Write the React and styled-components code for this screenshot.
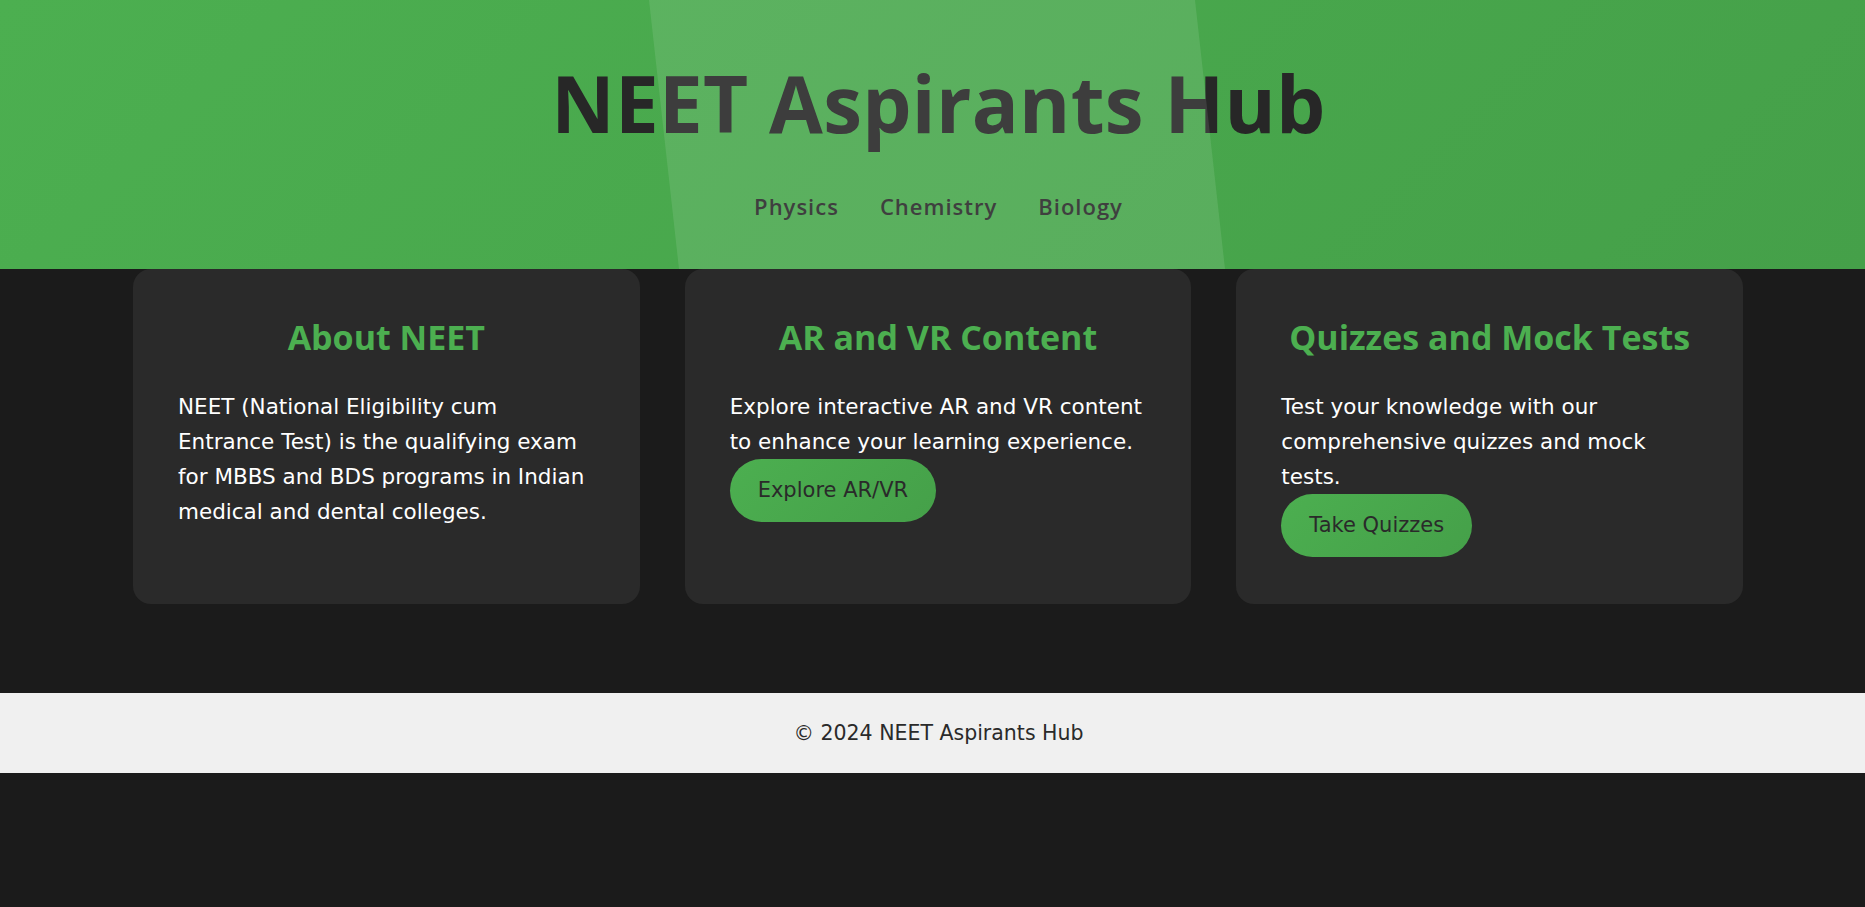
import React from "react";
import styled, { createGlobalStyle } from "styled-components";

const Global = createGlobalStyle`
  html, body { margin: 0; padding: 0; background: #1b1b1b; }
  body { font-family: "DejaVu Sans", "Open Sans", sans-serif; color: #fff; }
  * { box-sizing: border-box; }
`;

const Header = styled.header`
  position: relative;
  height: 269px;
  padding-left: 12px;
  background: linear-gradient(135deg, #4caf50, #45a049);
  display: flex;
  flex-direction: column;
  align-items: center;
  overflow: hidden;
  &::after {
    content: "";
    position: absolute;
    inset: 0;
    background: rgba(255, 255, 255, 0.1);
    clip-path: polygon(649px 0, 1195px 0, 1225px 100%, 679px 100%);
    pointer-events: none;
  }
`;

const Title = styled.h1`
  margin: 57px 0 0;
  font-family: "Open Sans", sans-serif;
  font-weight: 700;
  font-size: 78px;
  line-height: 1.2;
  letter-spacing: 0.3px;
  color: #272727;
`;

const Nav = styled.nav`
  display: flex;
  gap: 41px;
  margin-top: 39px;
`;

const NavLink = styled.a`
  font-family: "Open Sans", sans-serif;
  font-size: 22px;
  font-weight: 600;
  letter-spacing: 1px;
  color: #2a2a2a;
  text-decoration: none;
  line-height: 1.5;
`;

const Main = styled.main`
  display: flex;
  gap: 45px;
  padding: 0 122px 89px 133px;
`;

const Card = styled.section`
  flex: 1;
  background: #2a2a2a;
  border-radius: 18px;
  padding: 45px 45px 47px;
  display: flex;
  flex-direction: column;
  align-items: flex-start;
`;

const CardTitle = styled.h2`
  align-self: stretch;
  text-align: center;
  margin: 0 0 27px;
  font-family: "Open Sans", sans-serif;
  font-size: 34px;
  font-weight: 700;
  line-height: 1.4;
  color: #4caf50;
`;

const Text = styled.p`
  margin: 0;
  font-size: 21.5px;
  line-height: 35px;
  color: #fff;
`;

const Button = styled.a`
  display: inline-block;
  padding: 15px 28px;
  border-radius: 32px;
  background: linear-gradient(135deg, #4caf50, #45a049);
  color: #2a2a2a;
  font-size: 21px;
  line-height: 33px;
  text-decoration: none;
`;

const Footer = styled.footer`
  height: 80px;
  padding-left: 12px;
  background: #f0f0f0;
  display: flex;
  align-items: center;
  justify-content: center;
  color: #2a2a2a;
  font-size: 20.5px;
`;

const cards = [
  {
    title: "About NEET",
    text: "NEET (National Eligibility cum Entrance Test) is the qualifying exam for MBBS and BDS programs in Indian medical and dental colleges.",
  },
  {
    title: "AR and VR Content",
    text: "Explore interactive AR and VR content to enhance your learning experience.",
    button: "Explore AR/VR",
  },
  {
    title: "Quizzes and Mock Tests",
    text: "Test your knowledge with our comprehensive quizzes and mock tests.",
    button: "Take Quizzes",
  },
];

export default function App() {
  return (
    <>
      <Global />
      <Header>
        <Title>NEET Aspirants Hub</Title>
        <Nav>
          <NavLink href="#">Physics</NavLink>
          <NavLink href="#">Chemistry</NavLink>
          <NavLink href="#">Biology</NavLink>
        </Nav>
      </Header>
      <Main>
        {cards.map((c) => (
          <Card key={c.title}>
            <CardTitle>{c.title}</CardTitle>
            <Text>{c.text}</Text>
            {c.button && <Button href="#">{c.button}</Button>}
          </Card>
        ))}
      </Main>
      <Footer>© 2024 NEET Aspirants Hub</Footer>
    </>
  );
}
